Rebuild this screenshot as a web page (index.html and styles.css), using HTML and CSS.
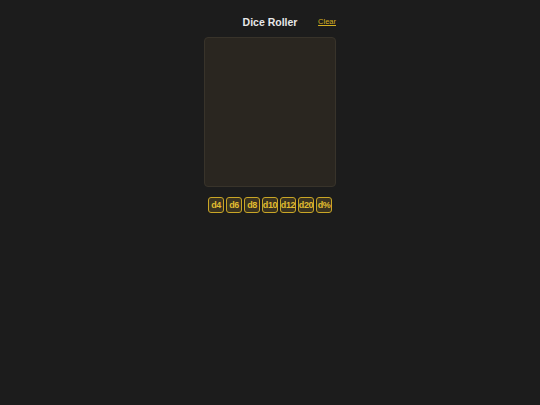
FILE: index.html
```html
<!DOCTYPE html>
<html>
<head>
<meta charset="utf-8">
<link rel="stylesheet" href="styles.css">
</head>
<body>
<div class="app">
  <div class="header">
    <h1 class="title">Dice Roller</h1>
    <a class="clear" href="#">Clear</a>
  </div>
  <div class="tray"></div>
  <div class="dice">
    <button class="die">d4</button>
    <button class="die">d6</button>
    <button class="die">d8</button>
    <button class="die">d10</button>
    <button class="die">d12</button>
    <button class="die">d20</button>
    <button class="die">d%</button>
  </div>
</div>
</body>
</html>
```
FILE: styles.css
```css
html, body {
  margin: 0;
  padding: 0;
  background: #1c1c1c;
  font-family: "Liberation Sans", Arial, sans-serif;
}
.app {
  width: 132px;
  margin: 0 auto;
  padding-top: 14px;
  display: flex;
  flex-direction: column;
  align-items: center;
}
.header {
  position: relative;
  width: 100%;
  height: 15px;
  display: flex;
  justify-content: center;
  align-items: center;
}
.title {
  margin: 0;
  font-size: 10.5px;
  font-weight: bold;
  color: #e8e8e8;
}
.clear {
  position: absolute;
  right: 0;
  top: 3px;
  font-size: 7.5px;
  color: #d4b020;
  text-decoration: underline;
}
.tray {
  margin-top: 8px;
  width: 130px;
  height: 148px;
  background: #2a2620;
  border: 1px solid #38332a;
  border-radius: 4px;
}
.dice {
  margin-top: 10px;
  display: flex;
  gap: 2px;
}
.die {
  width: 16px;
  height: 16px;
  padding: 0;
  margin: 0;
  box-sizing: border-box;
  border: 1px solid #c9a626;
  border-radius: 3px;
  background: #3a3320;
  color: #e0bc30;
  font-family: "Liberation Sans", Arial, sans-serif;
  font-size: 9px;
  font-weight: bold;
  display: flex;
  align-items: center;
  justify-content: center;
  letter-spacing: -0.4px;
  overflow: visible;
  white-space: nowrap;
}
```
